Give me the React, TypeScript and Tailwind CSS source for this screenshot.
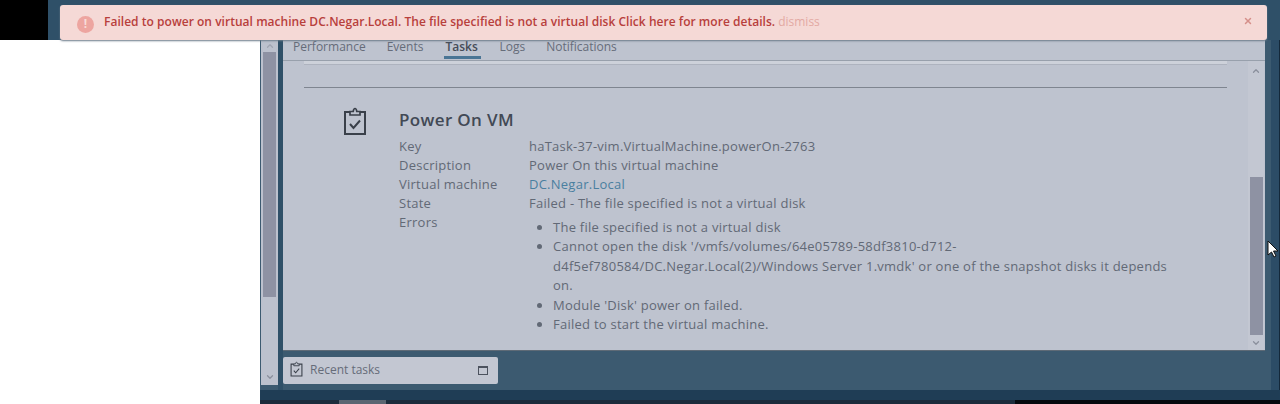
import { ChevronDown, ChevronUp, X } from "lucide-react";

const rows = [
  { label: "Key", value: "haTask-37-vim.VirtualMachine.powerOn-2763" },
  { label: "Description", value: "Power On this virtual machine" },
  { label: "Virtual machine", value: "DC.Negar.Local", link: true },
  { label: "State", value: "Failed - The file specified is not a virtual disk" },
];

const tabs = ["Performance", "Events", "Tasks", "Logs", "Notifications"];

function TaskIcon({ className }: { className: string }) {
  return (
    <svg viewBox="0 0 24 28" fill="none" stroke="currentColor" strokeWidth="2" className={className}>
      <path d="M7 5H2v22h20V5h-5" />
      <path d="M7 8V4.500h3.200C10.500 2.500 11 1.500 12 1.500s1.500 1 1.800 3H17V8z" strokeWidth="1.700" />
      <path d="M7 17l3.500 4L17 13.500" />
    </svg>
  );
}

function Banner() {
  return (
    <div className="absolute left-[60px] top-[5px] w-[1207px] h-[35px] flex items-center bg-[#f5d9d6] rounded-[3px] shadow-[0_1px_2px_#6b7a8a] pl-[17px] pr-[14px]">
      <span className="w-[17px] h-[17px] rounded-full bg-[#eda5a0] text-[#f8dcd9] flex items-center justify-center text-[12px] font-bold mr-[10px] mt-[3px]">
        !
      </span>
      <span className="text-[12px] font-semibold text-[#b8403c] whitespace-nowrap tracking-[0.03px] -mt-[2px]">
        Failed to power on virtual machine DC.Negar.Local. The file specified is not a virtual disk Click here for more details.
      </span>
      <span className="text-[12px] text-[#e3a9a3] ml-[3px] -mt-[2px]">dismiss</span>
      <X className="ml-auto w-[10px] h-[10px] text-[#d58f8a] -mt-[4px]" strokeWidth={3.500} />
    </div>
  );
}

export default function App() {
  return (
    <div className="relative w-[1280px] h-[404px] overflow-hidden flex bg-white font-['Open_Sans',sans-serif]">
      <div className="w-[260px] shrink-0 flex flex-col">
        <div className="h-[40px] flex">
          <div className="w-[48px] bg-black" />
          <div className="flex-1 bg-[#2f5068]" />
        </div>
      </div>

      <div className="flex-1 flex flex-col bg-[#3c5a70]">
        <div className="h-[40px] shrink-0 bg-[#2f5068]" />
        <div className="flex-1 flex min-h-0">
          <div className="w-[17px] ml-[1px] h-[345px] bg-[#bcc1cd] flex flex-col items-center">
            <ChevronUp className="w-[10px] h-[10px] text-[#a0a5b2] mt-[1px]" strokeWidth={3} />
            <div className="w-[13px] h-[245px] bg-[#8e92a3] mt-[1px]" />
            <ChevronDown className="w-[10px] h-[10px] text-[#8a8f9c] mt-auto mb-[3px]" strokeWidth={3} />
          </div>
          <div className="w-[5px] bg-[#2f5068]" />
          <div className="w-[982px] flex flex-col">
            <div className="h-[311px] bg-[#bec3cf] border-b border-[#5e6a76] flex flex-col">
              <div className="h-[21px] flex gap-[21px] pl-[10px] border-b border-[#98a0ac] shrink-0">
                {tabs.map((t) => (
                  <div
                    key={t}
                    className={
                      t === "Tasks"
                        ? "w-[37px] -mr-[3px] h-[21px] -mt-[2px] px-[1px] text-[12px] font-semibold text-[#454c58] border-b-[3px] border-[#4a7595]"
                        : "h-[20px] -mt-[2px] text-[12px] text-[#666c79]"
                    }
                  >
                    {t}
                  </div>
                ))}
              </div>
              <div className="flex-1 flex min-h-0">
                <div className="flex-1 pl-[21px] pr-[21px]">
                  <div className="h-[4px] bg-[#cdd1da] border-b border-[#aeb3bf]" />
                  <div className="h-px bg-[#7f8590] mt-[22px]" />
                  <div className="flex mt-[20px]">
                    <div className="w-[95px] pl-[39px] shrink-0">
                      <TaskIcon className="w-[24px] h-[28px] text-[#3a404a] -mt-[1px]" />
                    </div>
                    <div className="flex-1">
                      <h2 className="text-[17px] leading-[20px] font-semibold tracking-[0.35px] text-[#424955] mt-[2px] mb-[7px]">
                        Power On VM
                      </h2>
                      <div className="text-[13px] leading-[19px] tracking-[0.25px] text-[#626976]">
                        {rows.map((r) => (
                          <div key={r.label} className="flex">
                            <span className="w-[130px] shrink-0">{r.label}</span>
                            <span className={r.link ? "text-[#4a7fa0]" : ""}>{r.value}</span>
                          </div>
                        ))}
                        <div className="flex">
                          <span className="w-[130px] shrink-0">Errors</span>
                          <ul className="list-disc pl-[24px] mt-[4.500px] w-[650px] leading-[19.600px]">
                            <li>The file specified is not a virtual disk</li>
                            <li>
                              Cannot open the disk '/vmfs/volumes/64e05789-58df3810-d712-d4f5ef780584/DC.Negar.Local(2)/Windows Server 1.vmdk' or one of the snapshot disks it depends on.
                            </li>
                            <li>Module 'Disk' power on failed.</li>
                            <li>Failed to start the virtual machine.</li>
                          </ul>
                        </div>
                      </div>
                    </div>
                  </div>
                </div>
                <div className="w-[16px] mr-[1px] bg-[#c3c7d2] flex flex-col items-center">
                  <ChevronUp className="w-[10px] h-[10px] text-[#8a8f9c] mt-[5px]" strokeWidth={3} />
                  <div className="w-[13px] h-[158px] bg-[#8e92a3] mt-[101px]" />
                  <ChevronDown className="w-[10px] h-[10px] text-[#8a8f9c] mt-[3px]" strokeWidth={3} />
                </div>
              </div>
            </div>
            <div className="w-[215px] h-[27px] mt-[6px] bg-[#c3c7d2] rounded-[2px] flex items-center pl-[7px] pr-[10px] text-[12px] text-[#666c79]">
              <TaskIcon className="w-[13px] h-[16px] text-[#3a404a] mr-[7px] -mt-[3px]" />
              <span className="-mt-[1px]">Recent tasks</span>
              <span className="ml-auto w-[10px] h-[9px] border border-[#4c525e] border-t-2" />
            </div>
          </div>
          <div className="w-[6px] bg-[#3c5a70]" />
          <div className="w-[8px] bg-[#2c4c66]" />
          <div className="w-[1px] bg-[#14283a]" />
        </div>
        <div className="h-[14px] shrink-0 flex flex-col bg-[#1f3d55]">
          <div className="h-[10px]" />
          <div className="h-[4px] flex bg-[#1c2c3c]">
            <div className="w-[47px] ml-[79px] bg-[#5b6672]" />
            <div className="ml-auto w-[265px] bg-[#05090e]" />
          </div>
        </div>
      </div>

      <Banner />
      <svg viewBox="0 0 12 18" className="absolute left-[1267px] top-[240px] w-[12px] h-[18px]">
        <path d="M1 1v14l3.500-3 2.500 5 2-1-2.500-5H11z" fill="#fff" stroke="#111" strokeWidth="1" />
      </svg>
    </div>
  );
}
